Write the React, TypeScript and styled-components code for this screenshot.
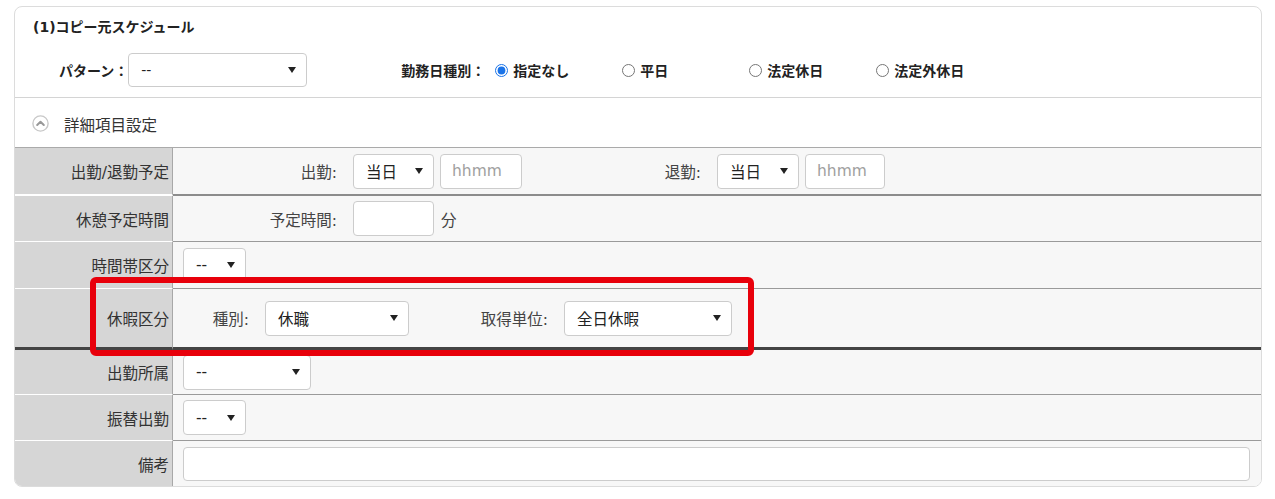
import React from "react";
import styled, { createGlobalStyle, css } from "styled-components";

const GlobalStyle = createGlobalStyle`
  html, body { margin: 0; padding: 0; background: #ffffff; }
  body {
    font-family: "DejaVu Sans", "Noto Sans CJK JP", sans-serif;
    color: #333333;
  }
  * { box-sizing: border-box; }
`;

const Page = styled.div`
  padding: 6px 13px 0 14px;
`;

const Card = styled.div`
  position: relative;
  width: 1248px;
  border: 1px solid #dcdcdc;
  border-radius: 8px;
  overflow: hidden;
  background: #ffffff;
`;

const Header = styled.div`
  padding: 10px 0 10px 18px;
  border-bottom: 1px solid #d4d4d4;
`;

const Title = styled.div`
  font-size: 14px;
  font-weight: bold;
  line-height: 20px;
  color: #222;
`;

const PatternRow = styled.div`
  display: flex;
  align-items: center;
  margin-top: 16px;
  padding-left: 26px;
  height: 34px;
`;

const BoldLabel = styled.span<{ $ml?: number }>`
  font-size: 14px;
  font-weight: bold;
  color: #222;
  white-space: nowrap;
  margin-left: ${(p) => p.$ml ?? 0}px;
`;

const RadioItem = styled.label<{ $first?: boolean }>`
  display: flex;
  align-items: center;
  gap: 5px;
  width: 127px;
  margin-left: ${(p) => (p.$first ? 10 : 0)}px;
  font-size: 14px;
  font-weight: bold;
  color: #222;
  white-space: nowrap;
`;

const Radio = styled.input`
  margin: 0;
  width: 13px;
  height: 13px;
  accent-color: #1a73e8;
`;

const Accordion = styled.div`
  display: flex;
  align-items: center;
  height: 49px;
  padding: 2px 0 0 17px;
  font-size: 15.5px;
  color: #333;
  gap: 15px;
`;

const Table = styled.div`
  border-top: 1px solid #aaaaaa;
`;

type Sep = "thin" | "thick" | "dark" | "none";

const sepStyle = (sep: Sep, label: boolean) => {
  if (sep === "none") return css``;
  if (sep === "dark") return css`border-bottom: 3px solid #444444;`;
  if (sep === "thick")
    return css`border-bottom: 2px solid ${label ? "#ffffff" : "#8c8c8c"};`;
  return css`border-bottom: 1px solid ${label ? "#ffffff" : "#9a9a9a"};`;
};

const Row = styled.div<{ $h: number }>`
  position: relative;
  display: grid;
  grid-template-columns: 158px 1fr;
  min-height: ${(p) => p.$h}px;
`;

const LabelCell = styled.div<{ $sep: Sep }>`
  display: flex;
  align-items: center;
  justify-content: flex-end;
  padding-right: 3px;
  background: #d6d6d6;
  border-right: 1px solid #a8a8a8;
  font-size: 15.5px;
  color: #333;
  white-space: nowrap;
  ${(p) => sepStyle(p.$sep, true)}
`;

const ValueCell = styled.div<{ $sep: Sep }>`
  display: flex;
  align-items: center;
  padding: 0 11px 0 10px;
  background: #f7f7f7;
  font-size: 15.5px;
  ${(p) => sepStyle(p.$sep, false)}
`;

const FieldLabel = styled.span<{ $w: number }>`
  width: ${(p) => p.$w}px;
  margin-right: 16px;
  text-align: right;
  color: #444;
  white-space: nowrap;
  flex: none;
`;

const SelectBox = styled.div<{ $w: number; $h?: number; $fs?: number }>`
  display: flex;
  align-items: center;
  justify-content: space-between;
  width: ${(p) => p.$w}px;
  height: ${(p) => p.$h ?? 35}px;
  padding: 0 10px 0 12px;
  background: #ffffff;
  border: 1px solid #cccccc;
  border-radius: 4px;
  font-size: ${(p) => p.$fs ?? 15.5}px;
  color: #222;
  flex: none;
  white-space: nowrap;
`;

const Caret = styled.span`
  width: 0;
  height: 0;
  border-left: 4px solid transparent;
  border-right: 4px solid transparent;
  border-top: 6px solid #222;
`;

const TextBox = styled.input<{ $w?: number; $h?: number; $ml?: number }>`
  width: ${(p) => (p.$w ? `${p.$w}px` : "100%")};
  height: ${(p) => p.$h ?? 35}px;
  margin: 0 0 0 ${(p) => p.$ml ?? 0}px;
  padding: 0 10px 0 11px;
  border: 1px solid #cccccc;
  border-radius: 4px;
  background: #ffffff;
  font-family: "DejaVu Sans", "Noto Sans CJK JP", sans-serif;
  font-size: 15.5px;
  color: #222;
  flex: none;
  outline: none;
  &::placeholder { color: #a0a0a0; }
`;

const Unit = styled.span`
  margin-left: 7px;
  color: #444;
`;

const Highlight = styled.div`
  position: absolute;
  left: 75px;
  top: -12px;
  width: 664px;
  height: 79px;
  border: 6px solid #e8000b;
  border-radius: 6px;
  z-index: 2;
  pointer-events: none;
`;

const Select = ({ w, value, h, fs }: { w: number; value: string; h?: number; fs?: number }) => (
  <SelectBox $w={w} $h={h} $fs={fs}>
    <span>{value}</span>
    <Caret />
  </SelectBox>
);

const ChevronCircle = () => (
  <svg width="17" height="17" viewBox="0 0 17 17">
    <circle cx="8.5" cy="8.5" r="7.6" fill="#fff" stroke="#c8c8c8" strokeWidth="1.4" />
    <path d="M5.2 10 L8.5 6.8 L11.8 10" fill="none" stroke="#999" strokeWidth="2" strokeLinecap="round" strokeLinejoin="round" />
  </svg>
);

export default function App() {
  return (
    <>
      <GlobalStyle />
      <Page>
        <Card>
          <Header>
            <Title>(1)コピー元スケジュール</Title>
            <PatternRow>
              <BoldLabel>パターン：</BoldLabel>
              <Select w={179} h={34} fs={14} value="--" />
              <BoldLabel $ml={94}>勤務日種別：</BoldLabel>
              <RadioItem $first>
                <Radio type="radio" name="kind" defaultChecked />
                指定なし
              </RadioItem>
              <RadioItem>
                <Radio type="radio" name="kind" />
                平日
              </RadioItem>
              <RadioItem>
                <Radio type="radio" name="kind" />
                法定休日
              </RadioItem>
              <RadioItem>
                <Radio type="radio" name="kind" />
                法定外休日
              </RadioItem>
            </PatternRow>
          </Header>
          <Accordion>
            <ChevronCircle />
            <span>詳細項目設定</span>
          </Accordion>
          <Table>
            <Row $h={48}>
              <LabelCell $sep="thick">出勤/退勤予定</LabelCell>
              <ValueCell $sep="thick">
                <FieldLabel $w={154}>出勤:</FieldLabel>
                <Select w={81} value="当日" />
                <TextBox $w={82} $ml={6} placeholder="hhmm" />
                <FieldLabel $w={179}>退勤:</FieldLabel>
                <Select w={82} value="当日" />
                <TextBox $w={80} $ml={6} placeholder="hhmm" />
              </ValueCell>
            </Row>
            <Row $h={46}>
              <LabelCell $sep="thin">休憩予定時間</LabelCell>
              <ValueCell $sep="thin">
                <FieldLabel $w={154}>予定時間:</FieldLabel>
                <TextBox $w={81} />
                <Unit>分</Unit>
              </ValueCell>
            </Row>
            <Row $h={47}>
              <LabelCell $sep="thin">時間帯区分</LabelCell>
              <ValueCell $sep="thin">
                <Select w={63} value="--" />
              </ValueCell>
            </Row>
            <Row $h={61}>
              <LabelCell $sep="dark">休暇区分</LabelCell>
              <ValueCell $sep="dark">
                <FieldLabel $w={66}>種別:</FieldLabel>
                <Select w={144} value="休職" />
                <FieldLabel $w={139}>取得単位:</FieldLabel>
                <Select w={168} value="全日休暇" />
              </ValueCell>
              <Highlight />
            </Row>
            <Row $h={45}>
              <LabelCell $sep="thin">出勤所属</LabelCell>
              <ValueCell $sep="thin">
                <Select w={128} value="--" />
              </ValueCell>
            </Row>
            <Row $h={46}>
              <LabelCell $sep="thin">振替出勤</LabelCell>
              <ValueCell $sep="thin">
                <Select w={63} value="--" />
              </ValueCell>
            </Row>
            <Row $h={45}>
              <LabelCell $sep="none">備考</LabelCell>
              <ValueCell $sep="none">
                <TextBox $h={34} />
              </ValueCell>
            </Row>
          </Table>
        </Card>
      </Page>
    </>
  );
}
